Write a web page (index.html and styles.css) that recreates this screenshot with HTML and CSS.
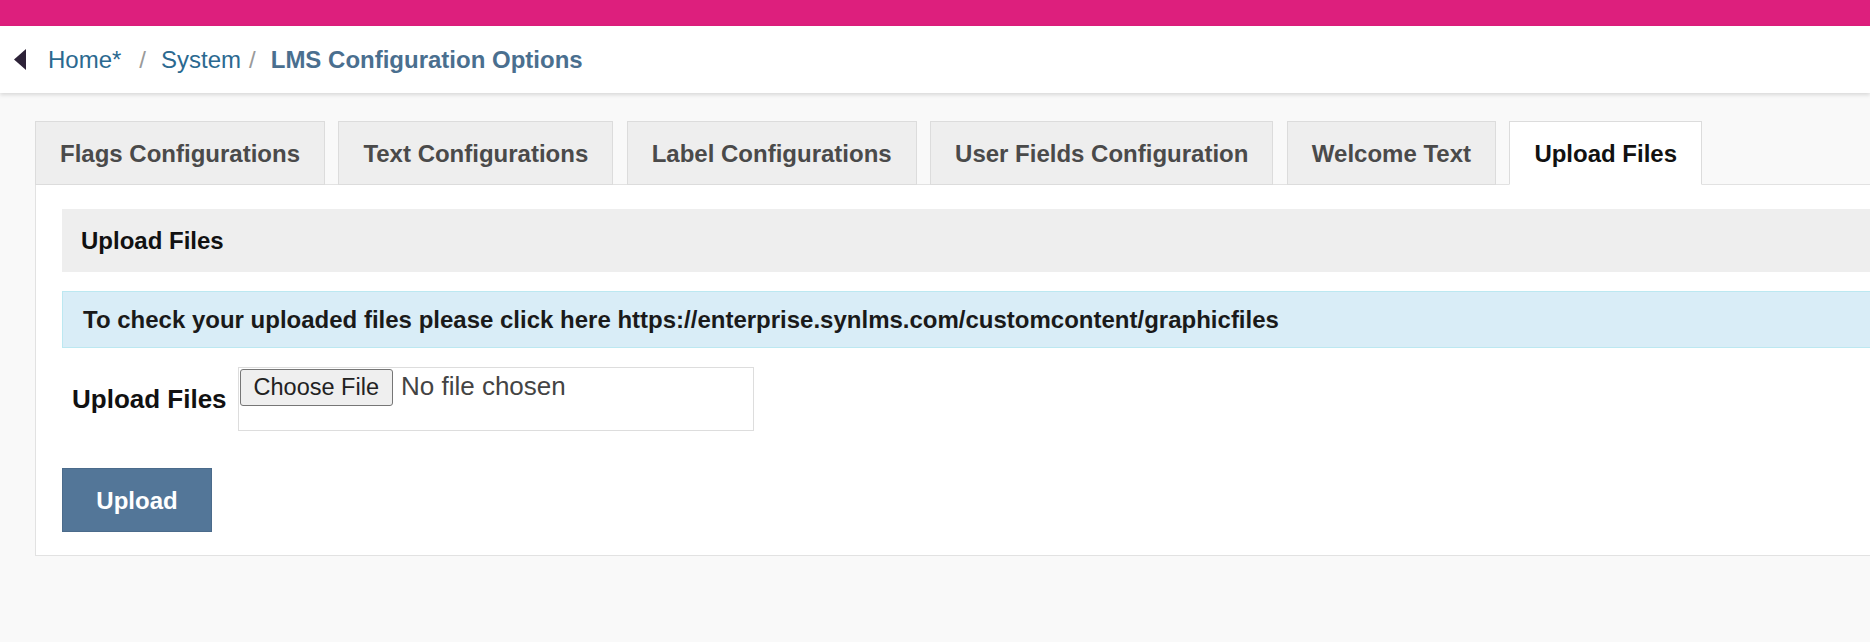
FILE: index.html
```html
<!doctype html>
<html lang="en">

<head>
  <title>LMS Configuration Options</title>
  <link rel="stylesheet" href="styles.css">
</head>

<body>
  <div class="topBar"></div>

  <div class="header">
    <svg class="backCaret" width="12" height="21" viewBox="0 0 12 21">
      <path d="M12 0 L0 10.5 L12 21 Z" fill="#2d2238" />
    </svg>
    <div class="crumbs">
      <a class="crumb home">Home*</a>
      <span class="sep">/</span>
      <a class="crumb">System</a>
      <span class="sep">/</span>
      <span class="crumb current">LMS Configuration Options</span>
    </div>
  </div>

  <div class="page">
    <ul class="tabs">
      <li class="tab">Flags Configurations</li>
      <li class="tab">Text Configurations</li>
      <li class="tab">Label Configurations</li>
      <li class="tab">User Fields Configuration</li>
      <li class="tab">Welcome Text</li>
      <li class="tab active">Upload Files</li>
    </ul>

    <div class="panel">
      <div class="sectionTitle">Upload Files</div>

      <div class="infoBox">
        To check your uploaded files please click here https://enterprise.synlms.com/customcontent/graphicfiles
      </div>

      <div class="formRow">
        <label class="fieldLabel" for="fileUpload">Upload Files</label>
        <div class="fileBox">
          <input id="fileUpload" class="fileInput" type="file">
        </div>
      </div>

      <button class="uploadBtn" type="button">Upload</button>
    </div>
  </div>
</body>

</html>
```

FILE: styles.css
```css
body {
  margin: 0;
  background-color: #f9f9f9;
  font-family: "Liberation Sans", Arial, sans-serif;
  overflow: hidden;
}

.topBar {
  height: 26px;
  background-color: #dd1f7d;
}

/* breadcrumb bar */
.header {
  height: 67px;
  background-color: #fff;
  display: flex;
  align-items: center;
  padding-left: 14px;
  box-shadow: 0 2px 4px rgba(0, 0, 0, 0.13);
  position: relative;
}

.backCaret {
  margin-right: 22px;
  display: block;
}

.crumbs {
  font-size: 24px;
  display: flex;
  align-items: center;
}

.crumb {
  color: #2b6990;
  text-decoration: none;
}

.home {
  margin-right: 10px;
}

.sep {
  color: #9a9a9a;
  padding: 0 15px 0 8px;
}

.current {
  color: #4a6f8f;
  font-weight: bold;
}

/* tabs */
.page {
  padding: 28px 0 0 35px;
}

.tabs {
  list-style: none;
  margin: 0 0 -1px 0;
  padding: 0;
  display: flex;
  position: relative;
}

.tab {
  box-sizing: border-box;
  height: 64px;
  line-height: 60px;
  padding: 2px 24px 0;
  margin-right: 13.4px;
  border: 1px solid #dcdcdc;
  background-color: #eeeeee;
  color: #4a4a4a;
  font-size: 24px;
  font-weight: bold;
  white-space: nowrap;
}

.tab.active {
  background-color: #fff;
  color: #111;
  border-bottom-color: #fff;
}

.panel {
  background-color: #fff;
  border: 1px solid #e2e2e2;
  border-right: none;
  padding: 24px 0 23px 26px;
}

.sectionTitle {
  height: 63px;
  display: flex;
  align-items: center;
  padding-left: 19px;
  background-color: #eeeeee;
  color: #111;
  font-size: 24px;
  font-weight: bold;
}

.infoBox {
  box-sizing: border-box;
  height: 57px;
  margin-top: 19px;
  display: flex;
  align-items: center;
  padding-left: 20px;
  background-color: #d9edf7;
  border: 1px solid #bce8f1;
  border-right: none;
  color: #1a1a1a;
  font-size: 24px;
  font-weight: bold;
  white-space: nowrap;
}

.formRow {
  margin-top: 19px;
  display: flex;
  align-items: center;
}

.fieldLabel {
  margin-left: 10px;
  margin-right: 11px;
  font-size: 26px;
  font-weight: bold;
  color: #111;
}

.fileBox {
  box-sizing: border-box;
  width: 516px;
  height: 64px;
  padding: 1px;
  border: 1px solid #dddddd;
}

.fileInput {
  display: block;
  height: 37px;
  font-family: "Liberation Sans", Arial, sans-serif;
  font-size: 26px;
  color: #444;
}

.fileInput::file-selector-button {
  height: 37px;
  padding: 0 13px;
  margin-right: 8px;
  background-color: #efefef;
  border: 1px solid #767676;
  border-radius: 3px;
  color: #222;
  font-family: "Liberation Sans", Arial, sans-serif;
  font-size: 23.5px;
}

.uploadBtn {
  display: block;
  margin-top: 37px;
  width: 150px;
  height: 64px;
  padding-top: 2px;
  background-color: #537698;
  border: 1px solid #4b6b8b;
  color: #fff;
  font-family: "Liberation Sans", Arial, sans-serif;
  font-size: 24px;
  font-weight: bold;
}
```
